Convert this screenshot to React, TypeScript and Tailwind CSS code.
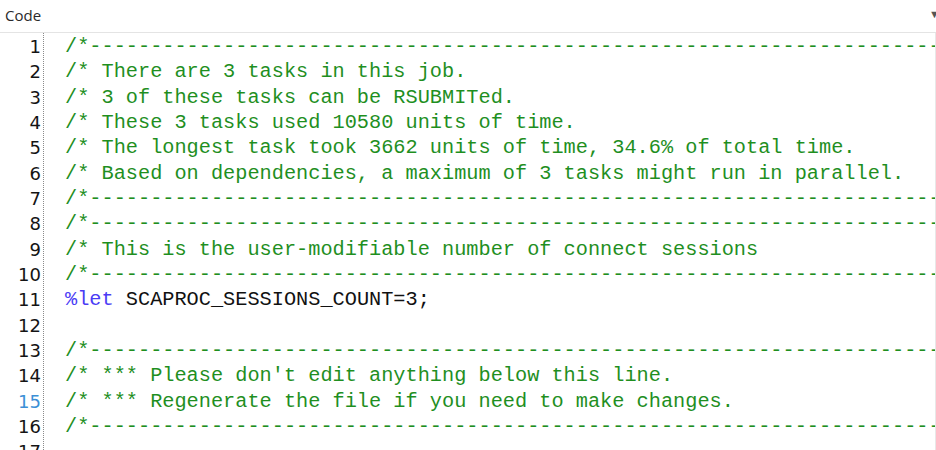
const DASHES = "/*" + "-".repeat(90);

type Line = { text?: string; kind?: "comment" | "let" | "blank" };

const lines: Line[] = [
  { text: DASHES, kind: "comment" },
  { text: "/* There are 3 tasks in this job.", kind: "comment" },
  { text: "/* 3 of these tasks can be RSUBMITed.", kind: "comment" },
  { text: "/* These 3 tasks used 10580 units of time.", kind: "comment" },
  { text: "/* The longest task took 3662 units of time, 34.6% of total time.", kind: "comment" },
  { text: "/* Based on dependencies, a maximum of 3 tasks might run in parallel.", kind: "comment" },
  { text: DASHES, kind: "comment" },
  { text: DASHES, kind: "comment" },
  { text: "/* This is the user-modifiable number of connect sessions", kind: "comment" },
  { text: DASHES, kind: "comment" },
  { kind: "let" },
  { kind: "blank" },
  { text: DASHES, kind: "comment" },
  { text: "/* *** Please don't edit anything below this line.", kind: "comment" },
  { text: "/* *** Regenerate the file if you need to make changes.", kind: "comment" },
  { text: DASHES, kind: "comment" },
  { kind: "blank" },
];

export default function App() {
  return (
    <div className="w-[936px] h-[450px] overflow-hidden bg-white relative">
      {/* header */}
      <div className="h-[33px] border-b border-[#e4e4e4] flex items-center px-[5px]">
        <span className="text-[15px] text-[#2a2a2a] font-['Open_Sans',sans-serif] -mt-[1px]">Code</span>
        <span className="ml-auto -mr-[9px] -mt-[4px] text-[11px] text-[#555]">▼</span>
      </div>

      {/* editor */}
      <div className="flex h-[417px] border-r border-[#e8e8e8]">
        <div className="w-[44px] shrink-0 border-r border-dotted border-[#8a8a8a] pr-[2px] pt-[1px]">
          {lines.map((_, i) => (
            <div
              key={i}
              className={`h-[25.33px] leading-[25.33px] text-right text-[18px] font-['DejaVu_Sans',sans-serif] ${
                i === 14 ? "text-[#3b8fd6]" : "text-[#141414]"
              }`}
            >
              {i + 1}
            </div>
          ))}
        </div>
        <div className="flex-1 overflow-hidden pl-[21px] pt-[1px] font-['Liberation_Mono',monospace] text-[20.27px]">
          {lines.map((l, i) => (
            <div key={i} className="h-[25.33px] leading-[25.33px] whitespace-pre">
              {l.kind === "comment" && <span className="text-[#1f8f1f]">{l.text}</span>}
              {l.kind === "let" && (
                <>
                  <span className="text-[#4b3cf5]">%let</span>
                  <span className="text-[#111]"> SCAPROC_SESSIONS_COUNT=3;</span>
                </>
              )}
            </div>
          ))}
        </div>
      </div>
    </div>
  );
}
